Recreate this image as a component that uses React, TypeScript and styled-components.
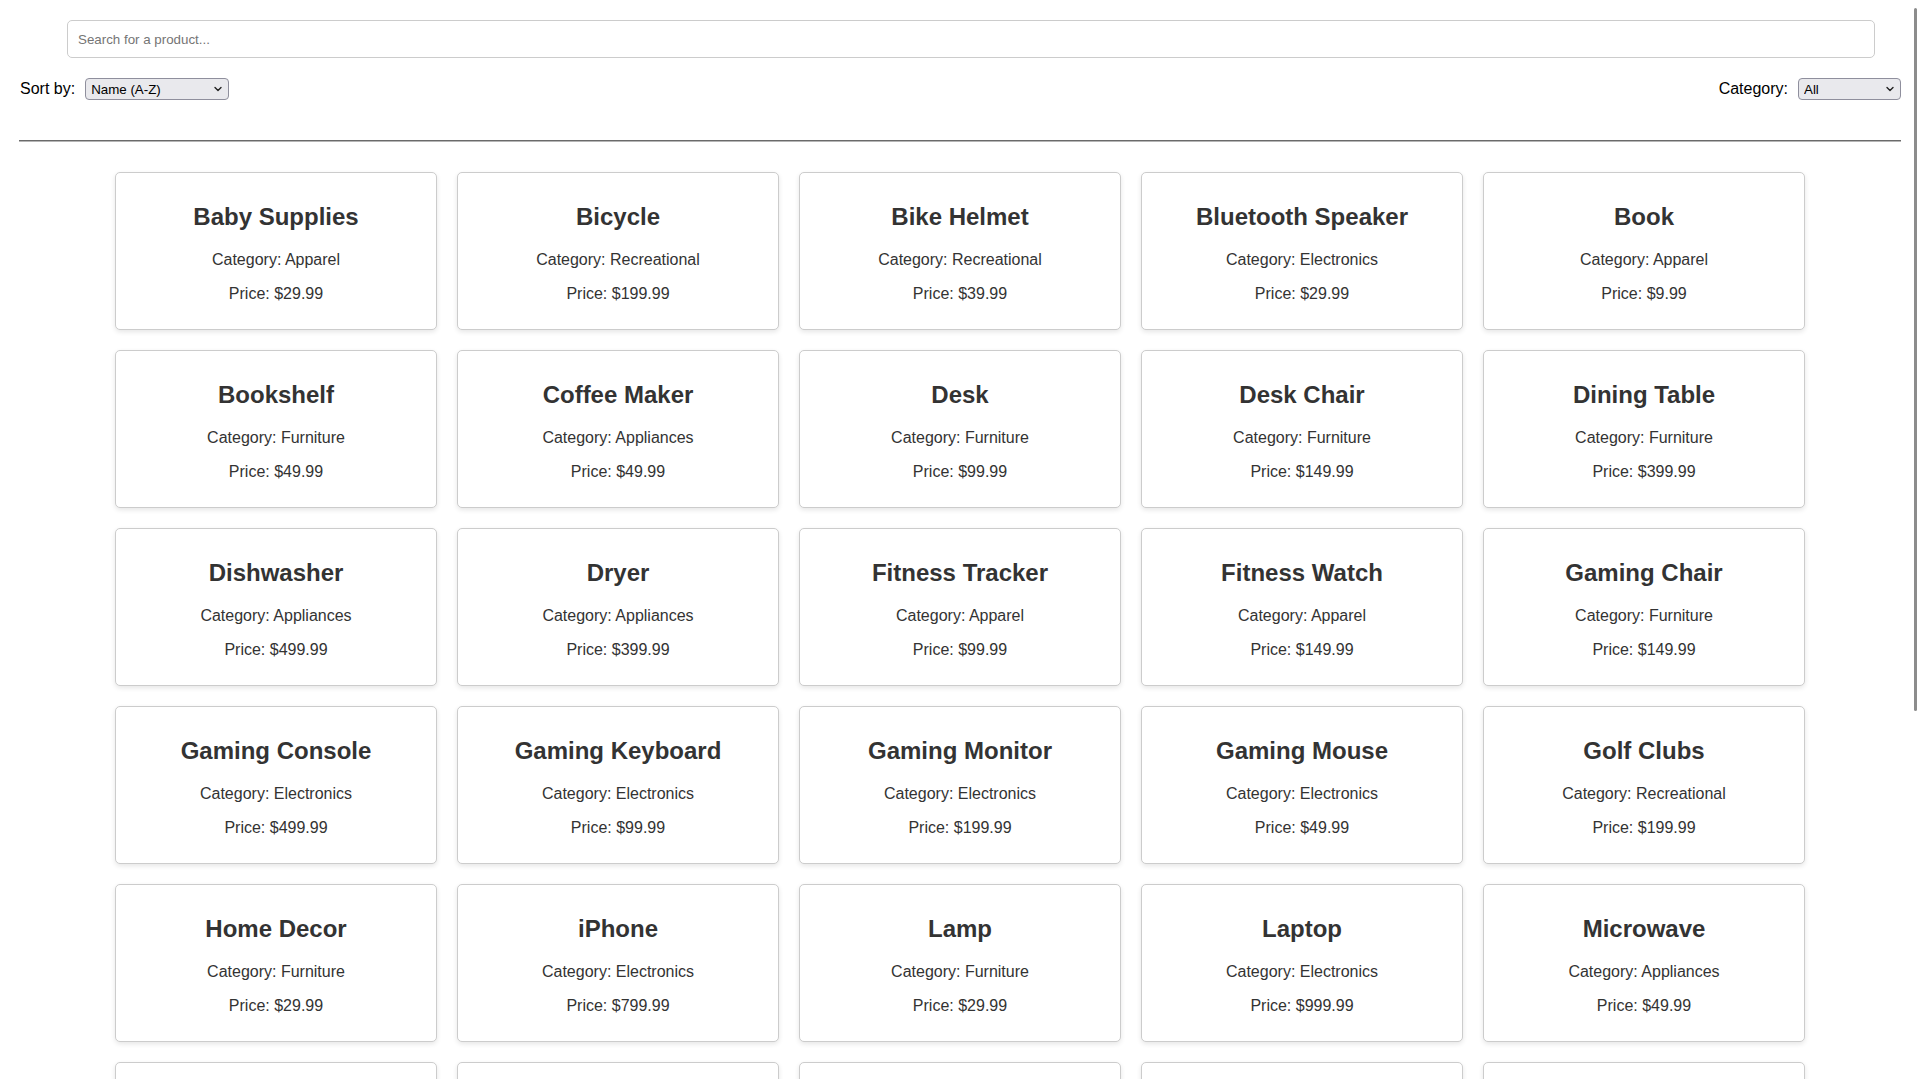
import React from "react";
import styled, { createGlobalStyle } from "styled-components";

type Product = { name: string; category: string; price: number };

const products: Product[] = [
  { name: "Baby Supplies", category: "Apparel", price: 29.99 },
  { name: "Bicycle", category: "Recreational", price: 199.99 },
  { name: "Bike Helmet", category: "Recreational", price: 39.99 },
  { name: "Bluetooth Speaker", category: "Electronics", price: 29.99 },
  { name: "Book", category: "Apparel", price: 9.99 },
  { name: "Bookshelf", category: "Furniture", price: 49.99 },
  { name: "Coffee Maker", category: "Appliances", price: 49.99 },
  { name: "Desk", category: "Furniture", price: 99.99 },
  { name: "Desk Chair", category: "Furniture", price: 149.99 },
  { name: "Dining Table", category: "Furniture", price: 399.99 },
  { name: "Dishwasher", category: "Appliances", price: 499.99 },
  { name: "Dryer", category: "Appliances", price: 399.99 },
  { name: "Fitness Tracker", category: "Apparel", price: 99.99 },
  { name: "Fitness Watch", category: "Apparel", price: 149.99 },
  { name: "Gaming Chair", category: "Furniture", price: 149.99 },
  { name: "Gaming Console", category: "Electronics", price: 499.99 },
  { name: "Gaming Keyboard", category: "Electronics", price: 99.99 },
  { name: "Gaming Monitor", category: "Electronics", price: 199.99 },
  { name: "Gaming Mouse", category: "Electronics", price: 49.99 },
  { name: "Golf Clubs", category: "Recreational", price: 199.99 },
  { name: "Home Decor", category: "Furniture", price: 29.99 },
  { name: "iPhone", category: "Electronics", price: 799.99 },
  { name: "Lamp", category: "Furniture", price: 29.99 },
  { name: "Laptop", category: "Electronics", price: 999.99 },
  { name: "Microwave", category: "Appliances", price: 49.99 },
  { name: "Mountain Bike", category: "Recreational", price: 299.99 },
  { name: "Office Desk", category: "Furniture", price: 199.99 },
  { name: "Refrigerator", category: "Appliances", price: 899.99 },
  { name: "Running Shoes", category: "Apparel", price: 79.99 },
  { name: "Smart TV", category: "Electronics", price: 599.99 },
];

const GlobalStyle = createGlobalStyle`
  html, body {
    margin: 0;
    padding: 0;
    overflow: hidden;
    background: #ffffff;
    font-family: "Liberation Sans", Arial, sans-serif;
  }
`;

const Page = styled.div`
  padding: 0 18px 0 19px;
`;

const SearchRow = styled.div`
  padding: 20px 26px 0 48px;
`;

const SearchInput = styled.input`
  display: block;
  width: 100%;
  height: 38px;
  box-sizing: border-box;
  padding: 0 10px;
  border: 1px solid #cccccc;
  border-radius: 5px;
  font-family: "Liberation Sans", Arial, sans-serif;
  font-size: 13.33px;
  color: #222;
  outline: none;
  &::placeholder {
    color: #757575;
  }
`;

const Controls = styled.div`
  margin-top: 20px;
  height: 22px;
  display: flex;
  justify-content: space-between;
  align-items: center;
`;

const Field = styled.label`
  display: flex;
  align-items: center;
  font-size: 16px;
  color: #000;
`;

const FieldLabel = styled.span`
  margin-right: 10px;
  padding-left: 1px;
`;

const SelectWrap = styled.span<{ $w: number }>`
  position: relative;
  display: inline-block;
  width: ${(p) => p.$w}px;
  height: 22px;
`;

const Select = styled.select`
  appearance: none;
  -webkit-appearance: none;
  width: 100%;
  height: 22px;
  box-sizing: border-box;
  margin: 0;
  padding: 0 20px 0 5px;
  background: #e9e9ed;
  border: 1px solid #8f8f9d;
  border-radius: 4px;
  font-family: "Liberation Sans", Arial, sans-serif;
  font-size: 13.33px;
  color: #000;
  outline: none;
`;

const Chevron = styled.svg`
  position: absolute;
  right: 7px;
  top: 8px;
  width: 8px;
  height: 6px;
  pointer-events: none;
`;

const Divider = styled.hr`
  margin: 40px 0 0 0;
  height: 0;
  border: none;
  border-top: 1px solid #6a6a6a;
  border-bottom: 1px solid #b5b5b5;
`;

const Grid = styled.div`
  margin-top: 20px;
  display: flex;
  flex-wrap: wrap;
  justify-content: center;
`;

const Card = styled.div`
  width: 300px;
  padding: 10px;
  margin: 10px;
  border: 1px solid #cccccc;
  border-radius: 5px;
  background: #fff;
  box-shadow: 0 2px 5px rgba(0, 0, 0, 0.1);
  text-align: center;
`;

const Title = styled.h2`
  margin: 20px 0;
  font-size: 24px;
  font-weight: bold;
  color: #333;
`;

const Detail = styled.p`
  margin: 16px 0;
  font-size: 16px;
  color: #333;
`;

const ScrollThumb = styled.div`
  position: fixed;
  right: 2px;
  top: 8px;
  width: 3px;
  height: 703px;
  background: #8c8c8c;
  border-radius: 2px;
`;

const ChevronIcon = () => (
  <Chevron viewBox="0 0 8 6">
    <path d="M1 1.5 L4 4.5 L7 1.5" fill="none" stroke="#222" strokeWidth="1.4" strokeLinecap="round" strokeLinejoin="round" />
  </Chevron>
);

export default function App() {
  return (
    <>
      <GlobalStyle />
      <Page>
        <SearchRow>
          <SearchInput placeholder="Search for a product..." />
        </SearchRow>
        <Controls>
          <Field>
            <FieldLabel>Sort by:</FieldLabel>
            <SelectWrap $w={144}>
              <Select defaultValue="name-asc">
                <option value="name-asc">Name (A-Z)</option>
                <option value="name-desc">Name (Z-A)</option>
                <option value="price-asc">Price (Low to High)</option>
                <option value="price-desc">Price (High to Low)</option>
              </Select>
              <ChevronIcon />
            </SelectWrap>
          </Field>
          <Field>
            <FieldLabel>Category:</FieldLabel>
            <SelectWrap $w={103}>
              <Select defaultValue="All">
                <option>All</option>
                <option>Apparel</option>
                <option>Appliances</option>
                <option>Electronics</option>
                <option>Furniture</option>
                <option>Recreational</option>
              </Select>
              <ChevronIcon />
            </SelectWrap>
          </Field>
        </Controls>
        <Divider />
        <Grid>
          {products.map((p) => (
            <Card key={p.name}>
              <Title>{p.name}</Title>
              <Detail>Category: {p.category}</Detail>
              <Detail>Price: ${p.price.toFixed(2)}</Detail>
            </Card>
          ))}
        </Grid>
      </Page>
      <ScrollThumb />
    </>
  );
}
